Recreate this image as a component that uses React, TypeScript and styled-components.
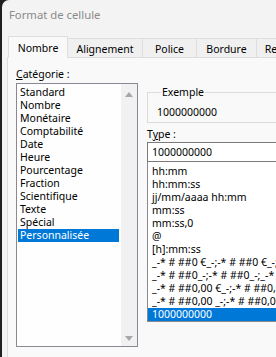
import React from 'react';
import styled, { createGlobalStyle } from 'styled-components';

const GlobalStyle = createGlobalStyle`
  html, body {
    margin: 0;
    padding: 0;
    background: #1f1f1f;
    overflow: hidden;
  }
  body {
    font-family: 'Noto Sans', 'Open Sans', sans-serif;
    font-size: 10.5px;
    color: #000;
  }
`;

const Window = styled.div`
  margin-left: 2px;
  height: 357px;
  background: #f3f3f3;
  border-top-left-radius: 7px;
  overflow: hidden;
  display: flex;
  flex-direction: column;
`;

const TitleBar = styled.div`
  height: 37px;
  padding: 8px 0 0 7px;
  box-sizing: border-box;
  font-size: 11.3px;
  line-height: 14px;
  color: #8b8b8b;
`;

const TabStrip = styled.div`
  display: flex;
  align-items: flex-end;
  height: 21px;
  margin-left: 6px;
  margin-bottom: -1px;
  position: relative;
  z-index: 1;
`;

const Tab = styled.div<{ $active?: boolean; $w: number }>`
  flex: none;
  width: ${p => p.$w}px;
  height: ${p => (p.$active ? 22 : 20)}px;
  box-sizing: border-box;
  display: flex;
  align-items: center;
  justify-content: center;
  padding-top: 1px;
  background: ${p => (p.$active ? '#f9f9f9' : '#f0f0f0')};
  border: 1px solid #dedede;
  border-bottom: ${p => (p.$active ? 'none' : '1px solid #dcdcdc')};
  margin-right: -1px;
  white-space: nowrap;
`;

const Panel = styled.div`
  flex: 1;
  margin-left: 5px;
  background: #f9f9f9;
  border-top: 1px solid #dcdcdc;
  border-left: 1px solid #dcdcdc;
  padding: 9px 0 0 8px;
  display: flex;
  align-items: flex-start;
`;

const LeftCol = styled.div`
  flex: none;
  width: 122px;
  display: flex;
  flex-direction: column;
`;

const RightCol = styled.div`
  flex: none;
  width: 170px;
  margin-left: 9px;
  display: flex;
  flex-direction: column;
`;

const Label = styled.div<{ $gap?: number }>`
  line-height: 15px;
  margin-top: ${p => p.$gap ?? 0}px;
  u {
    text-decoration: underline;
    text-underline-offset: 1px;
  }
`;

const CategoryBox = styled.div`
  margin-top: 1px;
  height: 264px;
  box-sizing: border-box;
  border: 1px solid #8a8890;
  background: #fdfefd;
  display: flex;
`;

const Items = styled.div`
  flex: 1;
  padding-top: 2px;
  overflow: hidden;
`;

const Item = styled.div<{ $selected?: boolean; $inset: number }>`
  height: 13px;
  line-height: 13px;
  margin-left: ${p => p.$inset}px;
  padding-left: ${p => (p.$inset ? 2 : 4)}px;
  margin-right: ${p => (p.$inset ? 2 : 0)}px;
  white-space: nowrap;
  background: ${p => (p.$selected ? '#0078d7' : 'transparent')};
  color: ${p => (p.$selected ? '#fff' : '#000')};
`;

const ScrollTrack = styled.div`
  flex: none;
  width: 16px;
  background: #f1f0f2;
  display: flex;
  flex-direction: column;
  justify-content: space-between;
  align-items: center;
  padding: 8px 0 5px;
  box-sizing: border-box;
`;

const Arrow = styled.div<{ $down?: boolean }>`
  width: 0;
  height: 0;
  border-left: 4px solid transparent;
  border-right: 4px solid transparent;
  ${p => (p.$down ? 'border-top: 5px solid #a6a6a6;' : 'border-bottom: 5px solid #a6a6a6;')}
`;

const Sample = styled.fieldset`
  margin: 18px 0 0;
  padding: 5px 0 2px 9px;
  min-width: 0;
  border: 1px solid #dcdcdc;
  legend {
    padding: 0 1px;
    margin-left: 4px;
    line-height: 15px;
  }
`;

const SampleValue = styled.div`
  line-height: 15px;
`;

const TypeInput = styled.div`
  height: 20px;
  box-sizing: border-box;
  border: 1px solid #7a7a7a;
  background: #fff;
  padding-left: 4px;
  line-height: 18px;
`;

const TypeList = styled.div`
  height: 160px;
  box-sizing: border-box;
  border: 1px solid #8a8890;
  border-top: none;
  background: #fff;
  padding-top: 3px;
  overflow: hidden;
`;

const tabs = [
  { label: 'Nombre', w: 60 },
  { label: 'Alignement', w: 76 },
  { label: 'Police', w: 55 },
  { label: 'Bordure', w: 61 },
  { label: 'Remplissage', w: 80 },
];

const categories = [
  'Standard',
  'Nombre',
  'Monétaire',
  'Comptabilité',
  'Date',
  'Heure',
  'Pourcentage',
  'Fraction',
  'Scientifique',
  'Texte',
  'Spécial',
  'Personnalisée',
];

const types = [
  'hh:mm',
  'hh:mm:ss',
  'jj/mm/aaaa hh:mm',
  'mm:ss',
  'mm:ss,0',
  '@',
  '[h]:mm:ss',
  '_-* # ##0 €_-;-* # ##0 €_-;_-* "-" €_-;_-@_-',
  '_-* # ##0_-;-* # ##0_-;_-* "-"_-;_-@_-',
  '_-* # ##0,00 €_-;-* # ##0,00 €_-;_-* "-"?? €_-;_-@_-',
  '_-* # ##0,00 _-;-* # ##0,00 _-;_-* "-"?? _-;_-@_-',
  '1000000000',
];

export default function App() {
  return (
    <>
      <GlobalStyle />
      <Window>
        <TitleBar>Format de cellule</TitleBar>
        <TabStrip>
          {tabs.map((t, i) => (
            <Tab key={t.label} $w={t.w} $active={i === 0}>
              {t.label}
            </Tab>
          ))}
        </TabStrip>
        <Panel>
          <LeftCol>
            <Label>
              <u>C</u>atégorie :
            </Label>
            <CategoryBox>
              <Items>
                {categories.map(c => (
                  <Item key={c} $inset={1} $selected={c === 'Personnalisée'}>
                    {c}
                  </Item>
                ))}
              </Items>
              <ScrollTrack>
                <Arrow />
                <Arrow $down />
              </ScrollTrack>
            </CategoryBox>
          </LeftCol>
          <RightCol>
            <Sample>
              <legend>Exemple</legend>
              <SampleValue>1000000000</SampleValue>
            </Sample>
            <Label $gap={4}>
              T<u>y</u>pe :
            </Label>
            <TypeInput>1000000000</TypeInput>
            <TypeList>
              {types.map((t, i) => (
                <Item key={i} $inset={0} $selected={i === types.length - 1}>
                  {t}
                </Item>
              ))}
            </TypeList>
          </RightCol>
        </Panel>
      </Window>
    </>
  );
}
